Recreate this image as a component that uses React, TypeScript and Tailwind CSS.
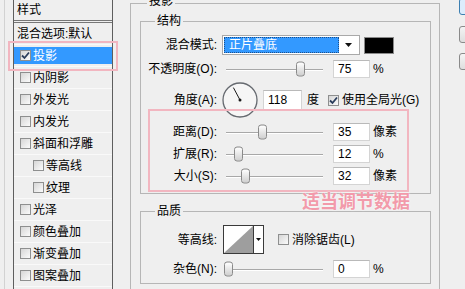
import React from 'react';

const effects = [
  { label: '内阴影', indent: false },
  { label: '外发光', indent: false },
  { label: '内发光', indent: false },
  { label: '斜面和浮雕', indent: false },
  { label: '等高线', indent: true },
  { label: '纹理', indent: true },
  { label: '光泽', indent: false },
  { label: '颜色叠加', indent: false },
  { label: '渐变叠加', indent: false },
  { label: '图案叠加', indent: false },
];

function Check({ on }: { on?: boolean }) {
  return (
    <span className="flex h-[11px] w-[11px] shrink-0 items-center justify-center border border-[#8e8f8f] bg-gradient-to-br from-[#d6d6d6] to-[#fbfbfb]">
      {on && (
        <svg width="9" height="9" viewBox="0 0 9 9">
          <path d="M1 4.5 L3.5 7 L8 1.5" fill="none" stroke="#2a3d5c" strokeWidth="1.8" />
        </svg>
      )}
    </span>
  );
}

function Slider({ pos }: { pos: number }) {
  return (
    <div className="relative ml-[9px] h-full w-[97px] shrink-0">
      <div className="absolute left-0 right-0 top-1/2 h-[2px] border-t border-[#a8a8a8] bg-white" />
      <div
        className="absolute top-1/2 h-[15px] w-[9px] -translate-y-1/2 rounded-[3px] border border-[#8a8a8a] bg-gradient-to-b from-white to-[#cfcfcf]"
        style={{ left: pos - 4.5 }}
      />
    </div>
  );
}

function Field({ value, w = 37, h = 18, ml = 10 }: { value: string; w?: number; h?: number; ml?: number }) {
  return (
    <div
      className="flex shrink-0 items-center border border-[#d4d4d4] border-t-[#b9b9b9] bg-white pl-[4px]"
      style={{ width: w, height: h, marginLeft: ml }}
    >
      {value}
    </div>
  );
}

function Label({ children }: { children: React.ReactNode }) {
  return <div className="w-[76px] shrink-0 text-right">{children}</div>;
}

function SliderRow({ label, pos, value, unit, className }: { label: string; pos: number; value: string; unit: string; className: string }) {
  return (
    <div className={`flex items-center ${className}`}>
      <Label>{label}</Label>
      <Slider pos={pos} />
      <Field value={value} />
      <span className="ml-[3px]">{unit}</span>
    </div>
  );
}

export default function App() {
  return (
    <div className="relative flex h-[289px] w-[465px] overflow-hidden bg-[#efefef] text-[12px] leading-none text-black font-['Liberation_Sans','Noto_Sans_CJK_SC',sans-serif]">
      {/* Style list */}
      <div className="flex w-[130px] shrink-0">
        <div className="ml-[4px] h-full border-l border-[#d2d2d2] pl-[8px]">
          <div className="h-full w-[100px] border-x border-[#5e5e5e]">
            <div className="flex h-[23px] items-center border-b-[3px] border-double border-[#777] pl-[3px]">样式</div>
            <div className="flex h-[22px] items-center border-b border-[#f9f9f9] pl-[3px]">混合选项:默认</div>
            <div className="h-[22px] border-b border-[#f9f9f9] py-[2px]">
              <div className="flex h-full items-center gap-[2px] bg-[#3399ff] pl-[6px] text-white">
                <Check on />
                <span>投影</span>
              </div>
            </div>
            {effects.map((e) => (
              <div
                key={e.label}
                className={`flex h-[22px] items-center gap-[2px] border-b border-[#f9f9f9] ${e.indent ? 'pl-[19px]' : 'pl-[6px]'}`}
              >
                <Check />
                <span>{e.label}</span>
              </div>
            ))}
          </div>
        </div>
      </div>

      {/* Drop shadow group */}
      <div className="relative mt-[3px] h-[300px] w-[310px] shrink-0 border border-[#b6b6b6] pl-[9px] pr-[8px] pt-[17px]">
        <span className="absolute left-[16px] top-[-11px] bg-[#efefef] px-[2px] leading-4">投影</span>

        <div className="relative h-[173px] border border-[#b6b6b6]">
          <span className="absolute left-[14px] top-[-9px] bg-[#efefef] px-[2px] leading-4">结构</span>

          <div className="mt-[13px] flex h-[20px] items-center">
            <Label>混合模式:</Label>
            <div className="ml-[5px] flex h-[20px] w-[138px] border border-[#a9a9a9] bg-white p-[1px]">
              <div className="flex flex-1 items-center border border-dotted border-[#1d4f8a] bg-[#3399ff] pl-[4px] text-white">
                正片叠底
              </div>
              <div className="flex w-[19px] items-center justify-center">
                <svg width="7" height="4" viewBox="0 0 7 4">
                  <polygon points="0,0 7,0 3.5,4" fill="#111" />
                </svg>
              </div>
            </div>
            <div className="ml-[4px] h-[17px] w-[30px] border border-[#8a8a8a] bg-black" />
          </div>

          <SliderRow label="不透明度(O):" pos={74} value="75" unit="%" className="mt-[5px] h-[18px]" />

          <div className="mt-[4px] flex h-[36px] items-center">
            <Label>角度(A):</Label>
            <svg className="ml-[5px] shrink-0" width="36" height="36" viewBox="0 0 36 36">
              <circle cx="18" cy="18" r="17" fill="#f6f6f6" stroke="#666a70" strokeWidth="1.3" />
              <line x1="18" y1="18" x2="11.4" y2="5.6" stroke="#1a1a1a" strokeWidth="1" />
              <circle cx="18" cy="18" r="1.5" fill="#1a1a1a" />
            </svg>
            <Field value="118" w={39} h={21} ml={5} />
            <span className="ml-[5px]">度</span>
            <span className="ml-[9px]">
              <Check on />
            </span>
            <span className="ml-[3px]">使用全局光(G)</span>
          </div>

          <SliderRow label="距离(D):" pos={36} value="35" unit="像素" className="mt-[3px] h-[22px]" />
          <SliderRow label="扩展(R):" pos={12} value="12" unit="%" className="h-[22px]" />
          <SliderRow label="大小(S):" pos={19} value="32" unit="像素" className="h-[22px]" />
        </div>

        <div className="relative mt-[17px] h-[73px] border border-[#b6b6b6]">
          <span className="absolute left-[14px] top-[-9px] bg-[#efefef] px-[2px] leading-4">品质</span>

          <div className="mt-[13px] flex h-[29px] items-center">
            <Label>等高线:</Label>
            <div className="ml-[6px] flex h-[29px] w-[41px] shrink-0 border border-[#3a3a3a] bg-white">
              <svg width="29" height="27" viewBox="0 0 29 27">
                <polygon points="0,27 29,0 29,27" fill="#9e9e9e" />
              </svg>
              <div className="flex flex-1 items-center justify-center border-l border-[#3a3a3a]">
                <svg width="5" height="3" viewBox="0 0 5 3">
                  <polygon points="0,0 5,0 2.5,3" fill="#111" />
                </svg>
              </div>
            </div>
            <span className="ml-[14px]">
              <Check />
            </span>
            <span className="ml-[3px]">消除锯齿(L)</span>
          </div>

          <SliderRow label="杂色(N):" pos={2} value="0" unit="%" className="mt-[6px] h-[18px]" />
        </div>
      </div>

      {/* Dialog buttons, cut off at the edge */}
      <div className="ml-[19px] w-[80px] shrink-0">
        <div className="mt-[-2px] h-[17px] rounded-[3px] border border-[#3c7fb1] bg-[#dcecfc]" />
        <div className="mt-[11px] h-[17px] rounded-[3px] border border-[#8a8a8a] bg-gradient-to-b from-[#f4f4f4] to-[#dedede]" />
        <div className="mt-[10px] h-[17px] rounded-[3px] border border-[#8a8a8a] bg-gradient-to-b from-[#f4f4f4] to-[#dedede]" />
      </div>

      {/* Annotations */}
      <div className="pointer-events-none absolute left-[8px] top-[41px] h-[30px] w-[110px] border-2 border-[#f2b6c0]" />
      <div className="pointer-events-none absolute left-[148px] top-[109px] h-[83px] w-[261px] border-2 border-[#f2b6c0]" />
      <span className="pointer-events-none absolute left-[302px] top-[193px] text-[18px] font-bold leading-none text-[#f29aaa] [text-shadow:0_0_2px_#fff]">
        适当调节数据
      </span>
    </div>
  );
}
